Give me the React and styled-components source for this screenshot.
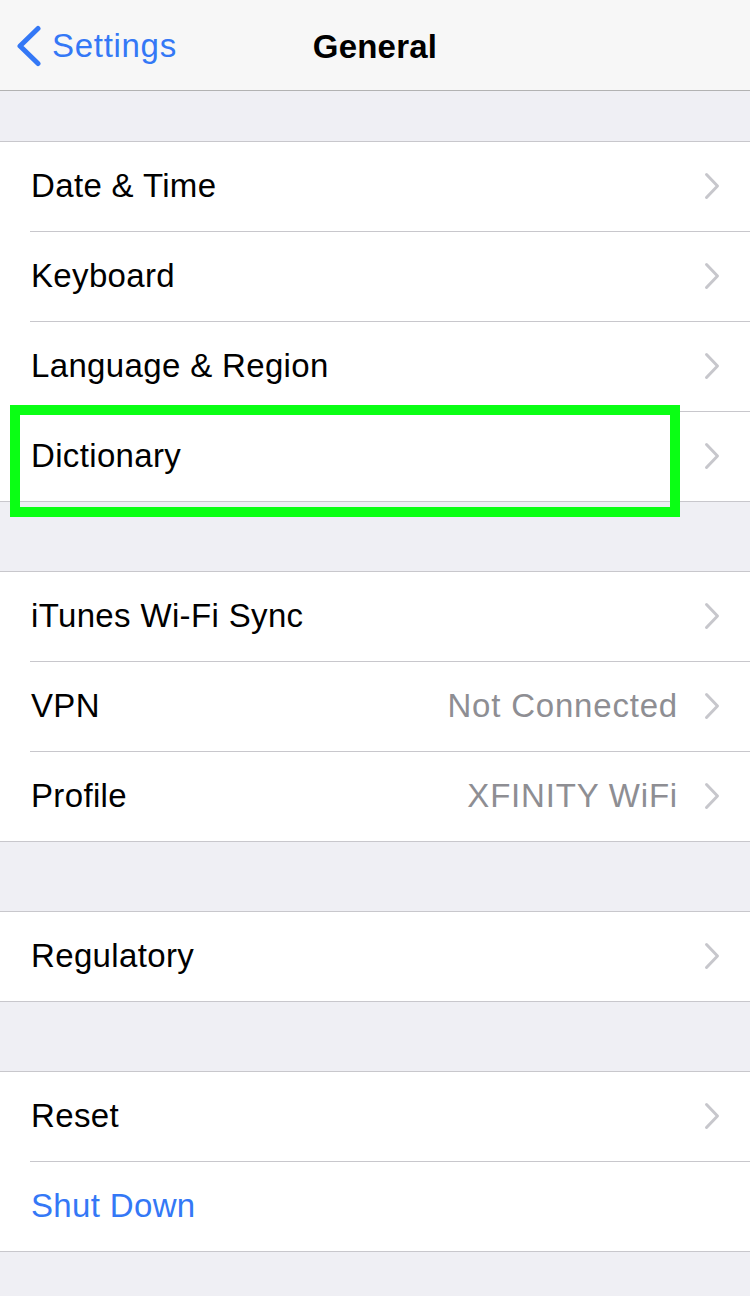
import styled, { createGlobalStyle } from "styled-components";

const GlobalStyle = createGlobalStyle`
  html, body {
    margin: 0;
    padding: 0;
    background: #efeff4;
  }
  body {
    font-family: "Liberation Sans", Arial, sans-serif;
    -webkit-font-smoothing: antialiased;
  }
`;

const groups = [
  [
    { label: "Date & Time" },
    { label: "Keyboard" },
    { label: "Language & Region" },
    { label: "Dictionary", highlight: true },
  ],
  [
    { label: "iTunes Wi-Fi Sync" },
    { label: "VPN", value: "Not Connected" },
    { label: "Profile", value: "XFINITY WiFi" },
  ],
  [{ label: "Regulatory" }],
  [{ label: "Reset" }, { label: "Shut Down", action: true }],
];

const Chevron = () => (
  <ChevronSvg width="16" height="28" viewBox="0 0 16 28">
    <polyline
      points="2.5,2.5 13.5,14 2.5,25.5"
      fill="none"
      stroke="#c7c7cc"
      strokeWidth="3"
      strokeLinecap="round"
      strokeLinejoin="round"
    />
  </ChevronSvg>
);

export default function App() {
  return (
    <>
      <GlobalStyle />
      <Page>
        <NavBar>
          <BackButton>
            <svg width="30" height="42" viewBox="0 0 30 42">
              <polyline
                points="24,3.5 6,21 24,38.5"
                fill="none"
                stroke="#3478f6"
                strokeWidth="5"
                strokeLinecap="round"
                strokeLinejoin="round"
              />
            </svg>
            <BackLabel>Settings</BackLabel>
          </BackButton>
          <Title>General</Title>
        </NavBar>
        <List>
          {groups.map((rows, gi) => (
            <Group key={gi}>
              {rows.map((row, ri) => (
                <Row key={row.label}>
                  <RowInner $last={ri === rows.length - 1}>
                    <Label $action={row.action}>{row.label}</Label>
                    {row.value && <Value>{row.value}</Value>}
                    {!row.action && <Chevron />}
                  </RowInner>
                  {row.highlight && <Highlight />}
                </Row>
              ))}
            </Group>
          ))}
        </List>
      </Page>
    </>
  );
}

const Page = styled.div`
  width: 750px;
  min-height: 1296px;
  background: #efeff4;
  overflow: hidden;
`;

const NavBar = styled.header`
  position: relative;
  height: 90px;
  background: #f7f7f7;
  border-bottom: 1px solid #b2b2b2;
  display: flex;
  align-items: center;
  justify-content: center;
`;

const BackButton = styled.div`
  position: absolute;
  left: 14px;
  top: 25px;
  display: flex;
  align-items: center;
  gap: 8px;
`;

const BackLabel = styled.span`
  font-size: 33px;
  letter-spacing: 0.7px;
  color: #3478f6;
`;

const Title = styled.h1`
  margin: 3px 0 0;
  font-size: 33px;
  font-weight: 700;
  color: #000;
  letter-spacing: 0.2px;
`;

const List = styled.main`
  display: flex;
  flex-direction: column;
  gap: 69px;
  padding-top: 50px;
`;

const Group = styled.section`
  background: #fff;
  border-top: 1px solid #c8c7cc;
  border-bottom: 1px solid #c8c7cc;
`;

const Row = styled.div`
  position: relative;
  padding-left: 30px;
`;

const RowInner = styled.div`
  box-sizing: border-box;
  height: ${(p) => (p.$last ? "89px" : "90px")};
  padding-bottom: 2px;
  display: flex;
  align-items: center;
  padding-right: 30px;
  border-bottom: ${(p) => (p.$last ? "none" : "1px solid #c8c7cc")};
`;

const Label = styled.span`
  flex: 1;
  font-size: 33px;
  letter-spacing: 0.35px;
  padding-left: 1px;
  color: ${(p) => (p.$action ? "#3478f6" : "#000")};
`;

const Value = styled.span`
  font-size: 33px;
  letter-spacing: 0.8px;
  color: #8e8e93;
  margin-right: 26px;
`;

const ChevronSvg = styled.svg`
  display: block;
  flex-shrink: 0;
`;

const Highlight = styled.div`
  position: absolute;
  left: 10px;
  top: -7px;
  width: 670px;
  height: 112px;
  box-sizing: border-box;
  border: 10px solid #0aff14;
  pointer-events: none;
`;
